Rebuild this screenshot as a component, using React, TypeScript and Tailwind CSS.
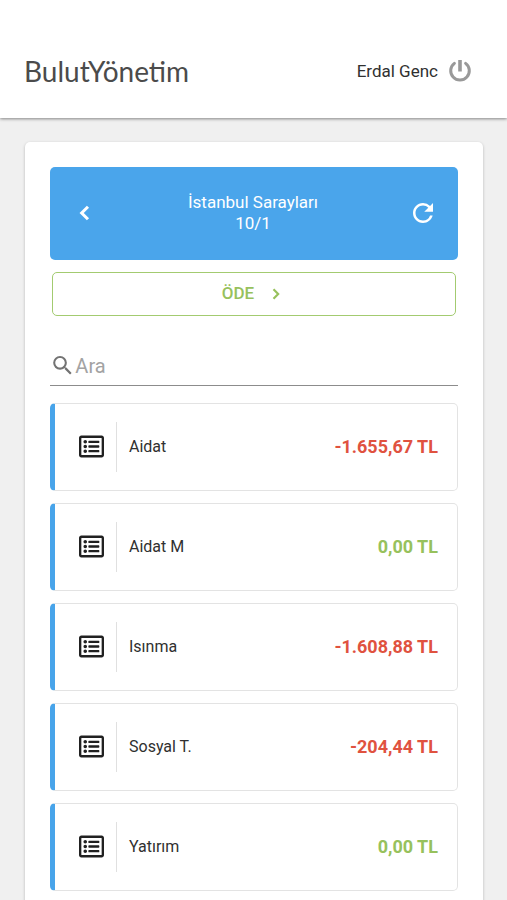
import { FaRegListAlt } from "react-icons/fa";
import { MdRefresh, MdSearch } from "react-icons/md";

type Account = { name: string; balance: string; debt: boolean };

const accounts: Account[] = [
  { name: "Aidat", balance: "-1.655,67 TL", debt: true },
  { name: "Aidat M", balance: "0,00 TL", debt: false },
  { name: "Isınma", balance: "-1.608,88 TL", debt: true },
  { name: "Sosyal T.", balance: "-204,44 TL", debt: true },
  { name: "Yatırım", balance: "0,00 TL", debt: false },
];

function PowerIcon() {
  return (
    <svg
      viewBox="0 0 24 24"
      className="size-6"
      fill="none"
      stroke="currentColor"
      strokeWidth="3"
      aria-hidden="true"
    >
      <path d="M12 1v11.5" strokeWidth="3.6" />
      <path d="M6.4 4.4a9.3 9.3 0 1 0 11.2 0" strokeLinecap="round" />
    </svg>
  );
}

function Chevron({ className, path }: { className: string; path: string }) {
  return (
    <svg
      viewBox="0 0 24 24"
      className={className}
      fill="none"
      stroke="currentColor"
      strokeWidth="2.6"
      aria-hidden="true"
    >
      <path d={path} />
    </svg>
  );
}

function Header() {
  return (
    <header className="relative flex h-[118px] items-center justify-between bg-white pt-6 pr-[35px] pl-6 shadow-[0_1px_3px_rgba(0,0,0,0.45)]">
      <h1 className="font-['Lato','Noto_Sans',sans-serif] text-[28px] leading-9 text-[#4b4b4b]">
        BulutYönetim
      </h1>
      <div className="flex items-center gap-2.5">
        <span className="text-[17px] leading-6">Erdal Genc</span>
        <button type="button" aria-label="Çıkış" className="text-[#999]">
          <PowerIcon />
        </button>
      </div>
    </header>
  );
}

function AccountRow({ name, balance, debt }: Account) {
  return (
    <li>
      <button
        type="button"
        className="flex h-[88px] w-full items-center rounded-[5px] border border-l-[5px] border-[#e3e3e3] border-l-[#48a4ea] pr-[19px] pb-px pl-6 text-left"
      >
        <FaRegListAlt className="size-[25px] text-[#212121]" />
        <span className="ml-3 flex h-[50px] flex-1 items-center border-l border-[#e0e0e0] pl-3 text-base">
          {name}
        </span>
        <span className={debt ? "text-lg font-bold text-[#e0523f]" : "text-lg font-bold text-[#97c15c]"}>
          {balance}
        </span>
      </button>
    </li>
  );
}

export default function App() {
  return (
    <div className="min-h-screen bg-[#f0f0f0] font-['Roboto','Liberation_Sans',sans-serif] text-[#303030]">
      <Header />
      <main className="py-6 pr-6 pl-[25px]">
        <section className="rounded-[5px] bg-white p-[25px] shadow-[0_1px_3px_rgba(0,0,0,0.25)]">
          <div className="flex h-[93px] items-center justify-between rounded-[5px] bg-[#4aa5eb] px-5 pb-px text-white">
            <button type="button" aria-label="Geri">
              <Chevron className="size-7" path="M15.4 6.6 10 12l5.4 5.4" />
            </button>
            <h2 className="text-center text-[17px] leading-[21px]">
              İstanbul Sarayları
              <br />
              10/1
            </h2>
            <button type="button" aria-label="Yenile">
              <MdRefresh className="size-[30px]" />
            </button>
          </div>

          <div className="px-0.5 pt-3">
            <button
              type="button"
              className="flex h-11 w-full items-center justify-center gap-3 rounded-[5px] border border-[#a3cb70] text-[17px] font-medium text-[#97c15c]"
            >
              ÖDE
              <Chevron className="size-5" path="M9 6.4 14.6 12 9 17.6" />
            </button>
          </div>

          <label className="mt-[30px] flex h-10 items-center border-b border-[#8c8c8c]">
            <MdSearch className="size-[27px] text-[#737373]" />
            <input
              type="text"
              aria-label="Ara"
              placeholder="Ara"
              className="w-full min-w-0 bg-transparent text-xl outline-none placeholder:text-[#a3a3a3]"
            />
          </label>

          <ul className="mt-[17px] flex flex-col gap-3">
            {accounts.map((account) => (
              <AccountRow key={account.name} {...account} />
            ))}
          </ul>
        </section>
      </main>
    </div>
  );
}
